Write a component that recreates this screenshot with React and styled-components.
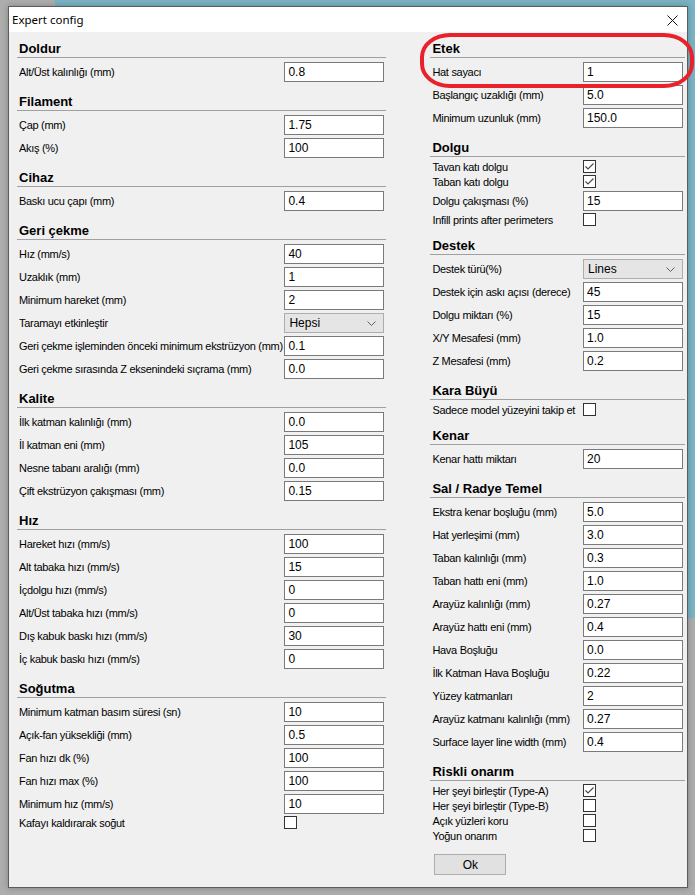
import React from 'react'
import styled, { createGlobalStyle } from 'styled-components';

const GlobalStyle = createGlobalStyle`
  html, body {
    margin: 0;
    padding: 0;
  }
  body {
    width: 695px;
    height: 895px;
    overflow: hidden;
    background: linear-gradient(#7ab3c4, #7ab3c4) 55px 0 / 640px 618px no-repeat, #adadad;
    font-family: "Liberation Sans", Arial, sans-serif;
  }
`;

const leftSections = [
  { title: 'Doldur', rows: [{ label: 'Alt/Üst kalınlığı (mm)', value: '0.8' }] },
  { title: 'Filament', rows: [{ label: 'Çap (mm)', value: '1.75' }, { label: 'Akış (%)', value: '100' }] },
  { title: 'Cihaz', rows: [{ label: 'Baskı ucu çapı (mm)', value: '0.4' }] },
  {
    title: 'Geri çekme', rows: [
      { label: 'Hız (mm/s)', value: '40' },
      { label: 'Uzaklık (mm)', value: '1' },
      { label: 'Minimum hareket (mm)', value: '2' },
      { label: 'Taramayı etkinleştir', select: 'Hepsi' },
      { label: 'Geri çekme işleminden önceki minimum ekstrüzyon (mm)', value: '0.1' },
      { label: 'Geri çekme sırasında Z eksenindeki sıçrama (mm)', value: '0.0' },
    ]
  },
  {
    title: 'Kalite', rows: [
      { label: 'İlk katman kalınlığı (mm)', value: '0.0' },
      { label: 'İl katman eni (mm)', value: '105' },
      { label: 'Nesne tabanı aralığı (mm)', value: '0.0' },
      { label: 'Çift ekstrüzyon çakışması (mm)', value: '0.15' },
    ]
  },
  {
    title: 'Hız', rows: [
      { label: 'Hareket hızı (mm/s)', value: '100' },
      { label: 'Alt tabaka hızı (mm/s)', value: '15' },
      { label: 'İçdolgu hızı (mm/s)', value: '0' },
      { label: 'Alt/Üst tabaka hızı (mm/s)', value: '0' },
      { label: 'Dış kabuk baskı hızı (mm/s)', value: '30' },
      { label: 'İç kabuk baskı hızı (mm/s)', value: '0' },
    ]
  },
  {
    title: 'Soğutma', rows: [
      { label: 'Minimum katman basım süresi (sn)', value: '10' },
      { label: 'Açık-fan yüksekliği (mm)', value: '0.5' },
      { label: 'Fan hızı dk (%)', value: '100' },
      { label: 'Fan hızı max (%)', value: '100' },
      { label: 'Minimum hız (mm/s)', value: '10' },
      { label: 'Kafayı kaldırarak soğut', check: false },
    ]
  },
];

const rightSections = [
  {
    title: 'Etek', rows: [
      { label: 'Hat sayacı', value: '1' },
      { label: 'Başlangıç uzaklığı (mm)', value: '5.0' },
      { label: 'Minimum uzunluk (mm)', value: '150.0' },
    ]
  },
  {
    title: 'Dolgu', rows: [
      { label: 'Tavan katı dolgu', check: true },
      { label: 'Taban katı dolgu', check: true },
      { label: 'Dolgu çakışması (%)', value: '15' },
      { label: 'Infill prints after perimeters', check: false },
    ]
  },
  {
    title: 'Destek', rows: [
      { label: 'Destek türü(%)', select: 'Lines' },
      { label: 'Destek için askı açısı (derece)', value: '45' },
      { label: 'Dolgu miktarı (%)', value: '15' },
      { label: 'X/Y Mesafesi (mm)', value: '1.0' },
      { label: 'Z Mesafesi (mm)', value: '0.2' },
    ]
  },
  { title: 'Kara Büyü', rows: [{ label: 'Sadece model yüzeyini takip et', check: false }] },
  { title: 'Kenar', rows: [{ label: 'Kenar hattı miktarı', value: '20' }] },
  {
    title: 'Sal / Radye Temel', rows: [
      { label: 'Ekstra kenar boşluğu (mm)', value: '5.0' },
      { label: 'Hat yerleşimi (mm)', value: '3.0' },
      { label: 'Taban kalınlığı (mm)', value: '0.3' },
      { label: 'Taban hattı eni (mm)', value: '1.0' },
      { label: 'Arayüz kalınlığı (mm)', value: '0.27' },
      { label: 'Arayüz hattı eni (mm)', value: '0.4' },
      { label: 'Hava Boşluğu', value: '0.0' },
      { label: 'İlk Katman Hava Boşluğu', value: '0.22' },
      { label: 'Yüzey katmanları', value: '2' },
      { label: 'Arayüz katmanı kalınlığı (mm)', value: '0.27' },
      { label: 'Surface layer line width (mm)', value: '0.4' },
    ]
  },
  {
    title: 'Riskli onarım', rows: [
      { label: 'Her şeyi birleştir (Type-A)', check: true },
      { label: 'Her şeyi birleştir (Type-B)', check: false },
      { label: 'Açık yüzleri koru', check: false },
      { label: 'Yoğun onarım', check: false },
    ]
  },
];

function Control({ row }) {
  if (row.select) {
    return (
      <Select>
        <span>{row.select}</span>
        <svg width="9" height="5" viewBox="0 0 9 5">
          <polyline points="0.5,0.5 4.5,4.5 8.5,0.5" fill="none" stroke="#606060" strokeWidth="1" />
        </svg>
      </Select>
    );
  }
  if (row.check !== undefined) {
    return (
      <CheckBox>
        {row.check && (
          <svg width="11" height="11" viewBox="0 0 11 11">
            <polyline points="1.5,5.5 4,8 9.5,2.5" fill="none" stroke="#4a4a4a" strokeWidth="1.2" />
          </svg>
        )}
      </CheckBox>
    );
  }
  return <Field type="text" defaultValue={row.value} readOnly />;
}

function Section({ section }) {
  return (
    <Group>
      <Heading>{section.title}</Heading>
      <RowList>
        {section.rows.map((row) => (
          <Row key={row.label} $check={row.check !== undefined}>
            <Label>{row.label}</Label>
            <Control row={row} />
          </Row>
        ))}
      </RowList>
    </Group>
  );
}

export default function App() {
  return (
    <>
      <GlobalStyle />
      <Window>
        <TitleBar>
          <span>Expert config</span>
          <svg width="11" height="11" viewBox="0 0 11 11">
            <path d="M0.5 0.5 L10.5 10.5 M10.5 0.5 L0.5 10.5" stroke="#111" strokeWidth="1" />
          </svg>
        </TitleBar>
        <Content>
          <Column $width={370}>
            {leftSections.map((s) => <Section key={s.title} section={s} />)}
          </Column>
          <Column $width={255}>
            {rightSections.map((s) => <Section key={s.title} section={s} />)}
            <OkButton type="button">Ok</OkButton>
          </Column>
        </Content>
        <Highlight />
      </Window>
    </>
  )
}

const Window = styled.div`
  position: relative;
  box-sizing: border-box;
  margin: 6px 0 0 8px;
  width: 680px;
  height: 882px;
  border: 1px solid #5c5c5c;
  background: #f0f0f0;
  box-shadow: 0 0 6px rgba(0, 0, 0, 0.25);
  display: flex;
  flex-direction: column;
`;

const TitleBar = styled.div`
  height: 25px;
  background: #fff;
  display: flex;
  align-items: center;
  justify-content: space-between;
  padding: 0 9px 0 3px;
  font-family: "Noto Sans", "Liberation Sans", sans-serif;
  font-size: 11.5px;
  color: #000;

  svg {
    margin-top: 1px;
  }
`;

const Content = styled.div`
  display: flex;
  gap: 44px;
  padding: 8px 2px 0 8px;
`;

const Column = styled.div`
  width: ${({ $width }) => $width}px;
  display: flex;
  flex-direction: column;
`;

const Group = styled.section`
  margin-top: 11px;

  &:first-child {
    margin-top: 0;
  }
`;

const Heading = styled.div`
  box-sizing: border-box;
  height: 18px;
  padding-left: 2px;
  border-bottom: 1px solid #a0a0a0;
  font-size: 13px;
  font-weight: bold;
  line-height: 17px;
  color: #000;
`;

const RowList = styled.div`
  display: flex;
  flex-direction: column;
  padding-top: 1px;
`;

const Row = styled.div`
  display: grid;
  grid-template-columns: 1fr 100px;
  align-items: center;
  height: ${({ $check }) => ($check ? 13 : 20)}px;
  margin-top: ${({ $check }) => ($check ? 2 : 3)}px;
  padding: 0 2px;
`;

const Label = styled.span`
  font-size: 11px;
  letter-spacing: -0.3px;
  color: #000;
  white-space: nowrap;
  overflow: hidden;
`;

const Field = styled.input`
  box-sizing: border-box;
  width: 100px;
  height: 20px;
  margin: 0;
  border: 1px solid #7a7a7a;
  padding: 0 3px;
  background: #fff;
  font-family: "Liberation Sans", Arial, sans-serif;
  font-size: 12px;
  color: #000;
  outline: none;
`;

const Select = styled.div`
  box-sizing: border-box;
  width: 100px;
  height: 20px;
  border: 1px solid #adadad;
  background: #e5e5e5;
  display: flex;
  align-items: center;
  justify-content: space-between;
  padding: 0 7px 0 4px;
  font-size: 12px;
`;

const CheckBox = styled.div`
  box-sizing: border-box;
  width: 13px;
  height: 13px;
  border: 1px solid #333;
  background: #fff;
  display: flex;
  align-items: center;
  justify-content: center;
`;

const OkButton = styled.button`
  box-sizing: border-box;
  width: 72px;
  height: 21px;
  margin: 12px 0 0 4px;
  border: 1px solid #adadad;
  background: #e1e1e1;
  font-family: "Liberation Sans", Arial, sans-serif;
  font-size: 12px;
  color: #000;
  padding: 0;
`;

const Highlight = styled.div`
  position: absolute;
  left: 411px;
  top: 26px;
  width: 274px;
  height: 55px;
  box-sizing: border-box;
  border: 4px solid #e8212b;
  border-radius: 30px / 24px;
  pointer-events: none;
`;
